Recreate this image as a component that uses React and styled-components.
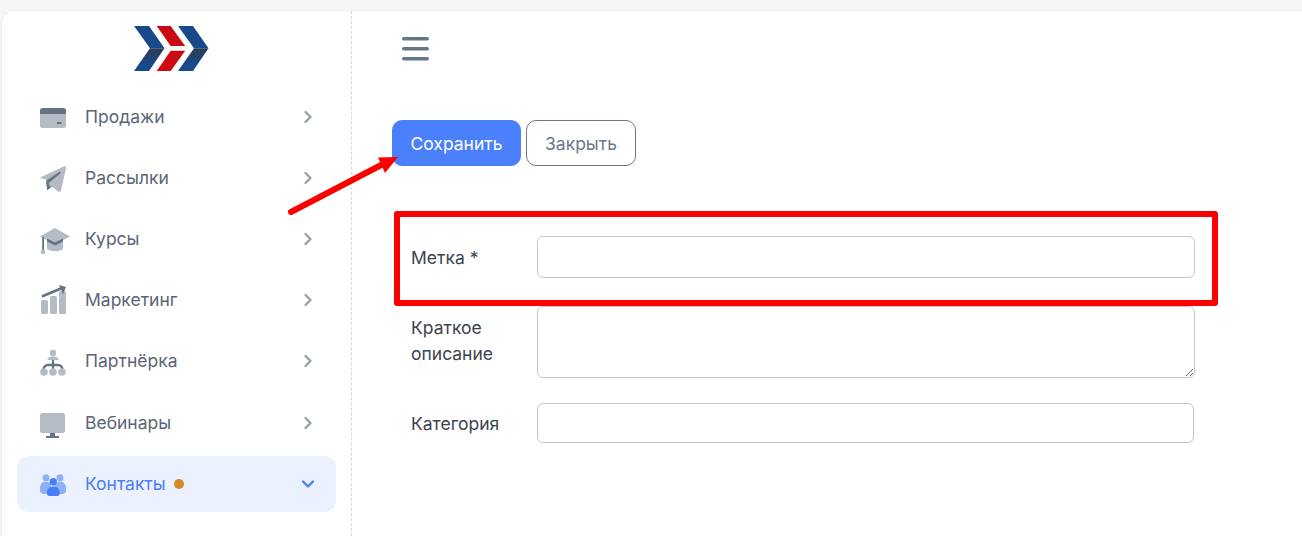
import React from 'react';
import styled, { createGlobalStyle } from 'styled-components';

const GlobalStyle = createGlobalStyle`
  html, body {
    margin: 0;
    padding: 0;
    height: 100%;
    overflow: hidden;
    background: #f6f6f6;
    font-family: Inter, "Liberation Sans", sans-serif;
  }
`;

const Page = styled.div`
  position: relative;
  width: 1302px;
  height: 536px;
  padding: 11px 0 0 2px;
  box-sizing: border-box;
  overflow: hidden;
`;

const Panel = styled.div`
  display: flex;
  height: 525px;
  background: #fff;
  border-radius: 12px 0 0 0;
  box-shadow: 0 0 2px rgba(0, 0, 0, 0.12);
`;

const Sidebar = styled.aside`
  flex: 0 0 350px;
  box-sizing: border-box;
  padding: 15px 15px 0;
  border-right: 1px dashed #d3d7db;
`;

const LogoRow = styled.div`
  display: flex;
  height: 63px;
  padding-left: 117px;
`;

const Menu = styled.nav`
  display: flex;
  flex-direction: column;
  gap: 5px;
`;

const MenuItem = styled.a`
  display: flex;
  align-items: center;
  height: 56.12px;
  padding: 0 21px 0 23px;
  border-radius: 12px;
  font-size: 17.5px;
  line-height: 22px;
  color: ${(p) => (p.$active ? '#4c7ff5' : '#5b6576')};
  background: ${(p) => (p.$active ? '#ebf1fe' : 'transparent')};
`;

const IconSlot = styled.svg`
  flex: 0 0 30px;
  width: 30px;
  height: 30px;
  margin-right: 15px;
`;

const Dot = styled.span`
  width: 10px;
  height: 10px;
  margin-left: 8px;
  border-radius: 50%;
  background: #d68a27;
`;

const Chevron = styled.svg`
  width: 14px;
  height: 14px;
  margin-left: auto;
  fill: none;
  stroke: ${(p) => (p.$active ? '#4c7ff5' : '#98a1ac')};
  stroke-width: 2.4;
  stroke-linecap: round;
  stroke-linejoin: round;
`;

const Main = styled.main`
  flex: 1;
  padding: 26px 0 0 40px;
`;

const Burger = styled.svg`
  display: block;
  width: 27px;
  height: 24px;
  margin-left: 10px;
`;

const Actions = styled.div`
  display: flex;
  gap: 5px;
  margin-top: 59px;
`;

const Button = styled.button`
  height: 46px;
  padding: 1px 0 0;
  width: ${(p) => p.$width}px;
  box-sizing: border-box;
  border-radius: 10px;
  font: 400 17.5px/22px Inter, "Liberation Sans", sans-serif;
  color: ${(p) => (p.$primary ? '#fff' : '#6c7888')};
  background: ${(p) => (p.$primary ? '#4a80fb' : '#fff')};
  border: 1px solid ${(p) => (p.$primary ? '#4a80fb' : '#6c7888')};
`;

const Form = styled.form`
  display: flex;
  flex-direction: column;
  width: 803px;
  margin-top: 70px;
  padding-left: 19px;
`;

const Row = styled.div`
  display: flex;
  align-items: ${(p) => (p.$top ? 'flex-start' : 'center')};
  margin-top: ${(p) => p.$gap || 0}px;
`;

const Label = styled.label`
  flex: 0 0 126px;
  box-sizing: border-box;
  padding: ${(p) => (p.$top ? '9px' : '2px')} 26px 0 0;
  font-size: 17.5px;
  line-height: 26px;
  color: #3c4350;
`;

const Input = styled.input`
  display: block;
  width: ${(p) => p.$width}px;
  height: ${(p) => p.$height}px;
  box-sizing: border-box;
  border: 1px solid #c6c6c6;
  border-radius: 6px;
  background: #fff;
  outline: none;
`;

const TextArea = styled.textarea`
  display: block;
  width: 658px;
  height: 72px;
  box-sizing: border-box;
  border: 1px solid #c6c6c6;
  border-radius: 6px;
  background: #fff;
  outline: none;
`;

// red marks drawn over the screenshot
const RedFrame = styled.div`
  position: absolute;
  left: 394px;
  top: 211px;
  width: 824px;
  height: 95px;
  box-sizing: border-box;
  border: 6px solid #fa0000;
  border-radius: 3px;
  pointer-events: none;
`;

const RedArrow = styled.svg`
  position: absolute;
  left: 280px;
  top: 150px;
  width: 125px;
  height: 70px;
  pointer-events: none;
`;

const LIGHT = '#b4bbc4';
const DARK = '#667384';

const icons = {
  card: (
    <>
      <path d="M2.5 6h21A2.5 2.5 0 0 1 26 8.5V12H0V8.5A2.5 2.5 0 0 1 2.5 6z" fill={DARK} />
      <path d="M0 12h26v11.500A2.500 2.500 0 0 1 23.500 26h-21A2.500 2.500 0 0 1 0 23.500z" fill={LIGHT} />
      <rect x="17" y="20" width="4.500" height="2" fill={DARK} />
    </>
  ),
  plane: (
    <>
      <path d="M1 14 24 3.500c1.500-.6 2.300.3 2 1.700l-5 22c-.4 1.700-2 2-3.100 1L11 23l-4 1-1-7.500-4.800-1.200C.2 15 .2 14.400 1 14z" fill={LIGHT} />
      <path d="M20 8.500 6.500 17.500 7 27l2.500-1.500-.7-5.400L20.800 10z" fill={DARK} />
      <path d="M6 17.500 7.500 27l4.500-3.500-4-1z" fill={DARK} />
    </>
  ),
  cap: (
    <>
      <path d="M15 4 30 12.500 15 20 0 12.500z" fill={LIGHT} />
      <path d="M7 15.500 15 19.500 23 15.500V25c-4 3-12 3-16 0z" fill={LIGHT} />
      <path d="M7 14.500 15 18.500 23 14.500V17.500L15 21.500 7 17.500z" fill={DARK} />
      <rect x="2.200" y="13" width="1.800" height="14" fill={DARK} />
      <circle cx="3" cy="28" r="2.300" fill={LIGHT} />
    </>
  ),
  chart: (
    <>
      <rect x="1" y="15" width="7" height="14" rx="1.500" fill={LIGHT} />
      <rect x="10" y="11" width="7" height="18" rx="1.500" fill={LIGHT} />
      <rect x="19" y="6" width="7" height="23" rx="1.500" fill={LIGHT} />
      <path d="M3 11 21 3.500" stroke={DARK} strokeWidth="2.800" strokeLinecap="round" fill="none" />
      <path d="M19 0 26 2 23 9z" fill={DARK} />
    </>
  ),
  tree: (
    <>
      <circle cx="13" cy="7" r="3.200" fill={LIGHT} />
      <path d="M7.500 14c0-2.500 2.500-3.500 5.500-3.500s5.500 1 5.500 3.500z" fill={LIGHT} />
      <path d="M13 14v5" stroke={DARK} strokeWidth="2.200" fill="none" />
      <path d="M3.500 24c0-3 2-5 4.500-5h10c2.500 0 4.500 2 4.500 5" stroke={DARK} strokeWidth="2.400" fill="none" />
      <path d="M13 18v6" stroke={DARK} strokeWidth="2.200" fill="none" />
      <circle cx="4" cy="26" r="3.800" fill={LIGHT} />
      <circle cx="13" cy="26" r="3.800" fill={LIGHT} />
      <circle cx="22" cy="26" r="3.800" fill={LIGHT} />
    </>
  ),
  monitor: (
    <>
      <rect x="0" y="5" width="25" height="20" rx="2.500" fill={LIGHT} />
      <path d="M10 25h5v3h-5z" fill={DARK} />
      <path d="M6 28h13v2H6z" fill={DARK} />
    </>
  ),
  users: (
    <>
      <circle cx="6" cy="8.700" r="3.500" fill="#8fb1f9" />
      <circle cx="20" cy="8.700" r="3.500" fill="#8fb1f9" />
      <path d="M0 19c0-4 2.500-6.500 6-6.500 2 0 4 1 5 3V25H4c-2.500 0-4-1.500-4-3.500z" fill="#8fb1f9" />
      <path d="M26 19c0-4-2.500-6.500-6-6.500-2 0-4 1-5 3V25h7c2.500 0 4-1.500 4-3.500z" fill="#8fb1f9" />
      <circle cx="13.300" cy="12.700" r="3.700" fill="#4680f8" />
      <path d="M6.800 24c0-4.500 3-6.500 6.500-6.500s6.500 2 6.500 6.500c0 2-1 3-2.500 3H9.300c-1.500 0-2.500-1-2.500-3z" fill="#4680f8" />
    </>
  ),
};

const items = [
  { label: 'Продажи', icon: 'card' },
  { label: 'Рассылки', icon: 'plane' },
  { label: 'Курсы', icon: 'cap' },
  { label: 'Маркетинг', icon: 'chart' },
  { label: 'Партнёрка', icon: 'tree' },
  { label: 'Вебинары', icon: 'monitor' },
  { label: 'Контакты', icon: 'users', active: true },
];

function Logo() {
  return (
    <svg width="75" height="45" viewBox="0 0 75 45">
      <defs>
        <linearGradient id="lowerBlue" x1="0" y1="22" x2="0" y2="45" gradientUnits="userSpaceOnUse">
          <stop offset="0.25" stopColor="#27405f" />
          <stop offset="0.7" stopColor="#17498b" />
        </linearGradient>
      </defs>
      <path d="M0 0h15l15.500 22.300H16z" fill="#17498b" />
      <path d="M16 22.300h14.500L15 45H0z" fill="url(#lowerBlue)" />
      <path d="M44 0h15l15.500 22.300H60z" fill="#17498b" />
      <path d="M60 22.300h14.500L59 45H44z" fill="url(#lowerBlue)" />
      <path d="M22.700 0h14l14.500 20H36.700z" fill="#cc0a12" />
      <path d="M36.700 24.700h14.500L36.700 45h-14z" fill="#cc0a12" />
    </svg>
  );
}

function App() {
  return (
    <Page>
      <GlobalStyle />
      <Panel>
        <Sidebar>
          <LogoRow>
            <Logo />
          </LogoRow>
          <Menu>
            {items.map((item) => (
              <MenuItem key={item.label} $active={item.active}>
                <IconSlot viewBox="0 0 30 30">{icons[item.icon]}</IconSlot>
                {item.label}
                {item.active && <Dot />}
                <Chevron viewBox="0 0 14 14" $active={item.active}>
                  {item.active ? <path d="M2 4.500 7 9.500 12 4.500" /> : <path d="M4.500 2 9.500 7 4.500 12" />}
                </Chevron>
              </MenuItem>
            ))}
          </Menu>
        </Sidebar>
        <Main>
          <Burger viewBox="0 0 28 24" preserveAspectRatio="none">
            <rect x="0" y="0" width="28" height="3.500" rx="1.700" fill="#667588" />
            <rect x="0" y="10" width="28" height="3.500" rx="1.700" fill="#667588" />
            <rect x="0" y="20" width="28" height="3.500" rx="1.700" fill="#667588" />
          </Burger>
          <Actions>
            <Button $primary $width={129}>Сохранить</Button>
            <Button $width={110}>Закрыть</Button>
          </Actions>
          <Form>
            <Row>
              <Label>Метка *</Label>
              <Input $width={658} $height={42} />
            </Row>
            <Row $top $gap={28}>
              <Label $top>Краткое описание</Label>
              <TextArea />
            </Row>
            <Row $gap={25}>
              <Label>Категория</Label>
              <Input $width={657} $height={40} />
            </Row>
          </Form>
        </Main>
      </Panel>
      <RedFrame />
      <RedArrow viewBox="0 0 125 70">
        <path d="M11 62 105 13" stroke="#fa0000" strokeWidth="6" strokeLinecap="round" fill="none" />
        <path d="M118 7 98 7.500 105 23z" fill="#fa0000" />
      </RedArrow>
    </Page>
  );
}

export default App;
